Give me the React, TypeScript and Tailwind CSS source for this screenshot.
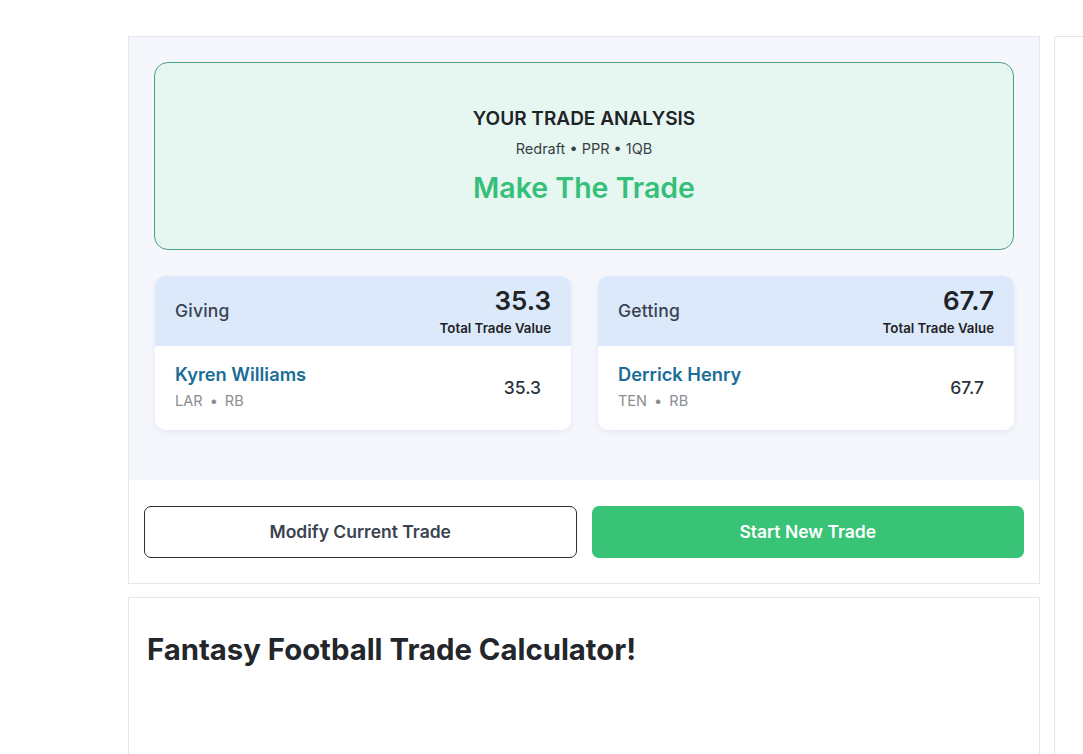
import type { ReactNode } from 'react'

type Player = { name: string; team: string; pos: string; value: number }

type Side = { label: string; total: number; players: Player[] }

const sides: Side[] = [
  { label: 'Giving', total: 35.3, players: [{ name: 'Kyren Williams', team: 'LAR', pos: 'RB', value: 35.3 }] },
  { label: 'Getting', total: 67.7, players: [{ name: 'Derrick Henry', team: 'TEN', pos: 'RB', value: 67.7 }] },
]

function Card({ children, className = '' }: { children?: ReactNode; className?: string }) {
  return <div className={`border border-[#e4e6ea] bg-white ${className}`}>{children}</div>
}

function SideCard({ side }: { side: Side }) {
  return (
    <div className="rounded-[10px] overflow-hidden bg-white shadow-[0_2px_6px_rgba(30,50,90,0.08)]">
      <div className="h-[70px] bg-[#dce9fb] flex items-center justify-between pl-5 pr-5">
        <span className="text-[17.5px] font-medium text-[#384352] tracking-[0.2px]">{side.label}</span>
        <div className="flex flex-col items-end pt-[2px]">
          <span className="text-[26px] leading-[28px] font-semibold text-[#1f2328]">{side.total.toFixed(1)}</span>
          <span className="mt-[4px] text-[13.3px] leading-[18px] font-semibold text-[#1f2328]">Total Trade Value</span>
        </div>
      </div>
      {side.players.map((p) => (
        <div key={p.name} className="h-[84px] flex items-center justify-between pl-5 pr-[30px]">
          <div className="flex flex-col pb-[4px]">
            <span className="text-[18.3px] leading-[24px] font-semibold text-[#1a6d96]">{p.name}</span>
            <span className="text-[14.5px] leading-[20px] mt-[5px] text-[#8a8d92]">
              {p.team} <span className="mx-[3px]">•</span> {p.pos}
            </span>
          </div>
          <span className="text-[17.5px] font-medium text-[#2c333d]">{p.value.toFixed(1)}</span>
        </div>
      ))}
    </div>
  )
}

export default function App() {
  return (
    <div className="h-[754px] bg-white pt-9 font-['Inter','Noto_Sans',sans-serif] overflow-hidden">
      <div className="flex gap-[14px]">
        <div className="ml-[128px] w-[912px] shrink-0 flex flex-col gap-[13px]">
          <Card>
            <div className="bg-[#f6f7fd] px-[25px] pt-[25px] pb-[50px]">
              <div className="h-[188px] rounded-[14px] border border-[#4c9f80] bg-[#e6f6f0] flex flex-col items-center pt-[43px]">
                <h2 className="text-[19px] leading-[26px] font-semibold text-[#1f2328]">YOUR TRADE ANALYSIS</h2>
                <p className="mt-[7px] text-[14.5px] leading-[20px] text-[#3a3f46]">Redraft • PPR • 1QB</p>
                <p className="mt-[11px] text-[28.5px] leading-[36px] font-semibold text-[#35c07a]">Make The Trade</p>
              </div>
              <div className="mt-[26px] grid grid-cols-2 gap-[27px] pl-px">
                {sides.map((s) => (
                  <SideCard key={s.label} side={s} />
                ))}
              </div>
            </div>
            <div className="grid grid-cols-2 gap-[15px] px-[15px] pt-[26px] pb-[25px]">
              <button className="h-[52px] rounded-[7px] border border-[#2a2f36] bg-white text-[17.5px] font-semibold text-[#3a4350]">
                Modify Current Trade
              </button>
              <button className="h-[52px] rounded-[7px] bg-[#38c377] text-[17.5px] font-semibold text-white">
                Start New Trade
              </button>
            </div>
          </Card>
          <Card className="h-[200px] px-[18px] pt-[35px]">
            <h1 className="text-[29.3px] leading-[34px] font-bold text-[#23262b]">Fantasy Football Trade Calculator!</h1>
          </Card>
        </div>
        <Card className="w-[60px] h-[720px] shrink-0" />
      </div>
    </div>
  )
}
